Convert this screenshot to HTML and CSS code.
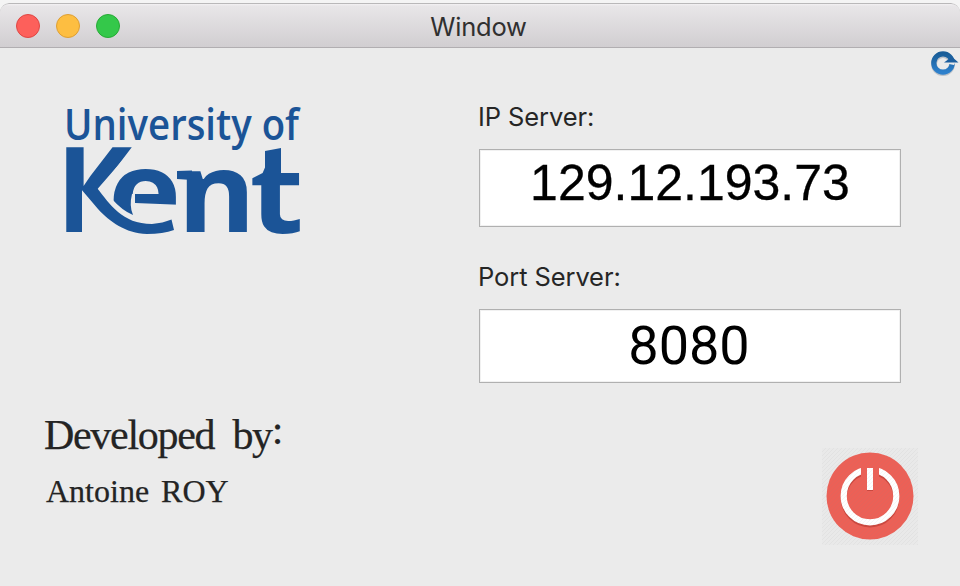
FILE: index.html
```html
<!DOCTYPE html>
<html lang="en">
<head>
<meta charset="utf-8">
<title>Window</title>
<link rel="stylesheet" href="styles.css">
</head>
<body>
<div class="window">
  <header class="titlebar">
    <div class="lights"><i class="light close"></i><i class="light minimise"></i><i class="light zoom"></i></div>
    <h1 class="title">Window</h1>
  </header>
  <main class="content">
    <section class="left">
      <svg class="logo" viewBox="60 100 250 140" role="img" aria-label="University of Kent">
        <defs>
          <clipPath id="k-top"><path d="M60 140H140L97.500 189H82V240H60Z"/></clipPath>
          <clipPath id="e-top"><path d="M100 150H185V205L135 203V194H132Q129 206 133 215Q122 210.500 112 199Z"/></clipPath>
        </defs>
        <g fill="#1b5497">
          <text class="logo-small" x="64" y="139.500" textLength="235" lengthAdjust="spacingAndGlyphs">University of</text>
          <g clip-path="url(#k-top)"><text class="logo-big" transform="translate(56 232) scale(.97 1)">K</text></g>
          <g clip-path="url(#e-top)"><text class="logo-big" transform="translate(108 232) scale(1.05 .95)">e</text></g>
          <text class="logo-big" transform="translate(177.500 232) scale(1.010 .95)">n</text>
          <text class="logo-big" transform="translate(249.500 232.500) scale(1.06 .93)">t</text>
          <path d="M177 171L192 170.500V180L177 179Z"/>
          <path d="M265 151L281 148V176H265Z"/>
          <path d="M81 187L97 188C110 204 122 224 152 224Q163 223 171.500 219.500L174 230Q163 234 147 234C125 233 110 222 98 209L81 189Z"/>
        </g>
      </svg>
      <div class="credits">
        <p class="credit-label">Developed by<span class="colon">:</span></p>
        <p class="credit-name">Antoine ROY</p>
      </div>
    </section>
    <section class="right">
      <label class="label" for="ip">IP Server:</label>
      <div class="field ip" id="ip">129.12.193.73</div>
      <label class="label port-label" for="port">Port Server:</label>
      <div class="field port" id="port">8080</div>
      <button class="power" aria-label="Power">
        <svg viewBox="0 0 96 97" width="96" height="97">
          <defs><pattern id="hatch" width="4" height="4" patternUnits="userSpaceOnUse"><path d="M-1 1L1-1M0 4L4 0M3 5L5 3" stroke="#888" stroke-opacity=".1" stroke-width=".8"/></pattern></defs>
          <rect width="96" height="97" fill="#e9e9e9"/>
          <circle cx="48" cy="48" r="43.500" fill="#ec6056"/>
          <circle cx="48" cy="50" r="26.300" fill="none" stroke="#cb473e" stroke-width="6.200"/>
          <circle cx="48" cy="48" r="26.300" fill="none" stroke="#fff" stroke-width="6.200"/>
          <path d="M39 17h18v13H39z" fill="#ec6056"/>
          <path d="M45 41.500h6v1.500h-6z" fill="#cb473e"/><path d="M45 20h6v22h-6z" fill="#fff"/>
          <rect width="96" height="97" fill="url(#hatch)"/>
        </svg>
      </button>
    </section>
    <svg class="refresh" viewBox="0 0 30 28" aria-label="Refresh">
      <defs><linearGradient id="blue" x2="0" y2="1"><stop stop-color="#195d98"/><stop offset="1" stop-color="#2d80cc"/></linearGradient></defs>
      <circle cx="13" cy="14" r="9" fill="none" stroke="#9aa4af" stroke-width="6" opacity=".6"/>
      <circle cx="13" cy="13" r="9.200" fill="none" stroke="url(#blue)" stroke-width="5.200"/>
      <path d="M17 13L22 9H27L24 15L19 14Z" fill="#ebebeb"/>
      <path d="M14 12.500L19.500 8.500L21 6L28.500 12.500Z" fill="#1c5e9e"/>
    </svg>
  </main>
</div>
</body>
</html>
```
FILE: styles.css
```css
* { box-sizing: border-box; }
body { margin: 0; padding-top: 3px; height: 586px; overflow: hidden; background: #f4f4f4; font-family: Inter, "Liberation Sans", sans-serif; }
h1, p { margin: 0; font-weight: 400; }
.window { height: 583px; background: #ebebeb; border-radius: 9px 9px 0 0; overflow: hidden; }
.titlebar { height: 45px; display: grid; grid-template-columns: 1fr auto 1fr; align-items: center; border-top: 1px solid #b9b8b9; border-bottom: 1px solid #b1aeb1; background: linear-gradient(#f3f1f3 0, #e8e6e8 2px, #d1ced1 100%); border-radius: 9px 9px 0 0; }
.lights { display: flex; gap: 16px; padding-left: 16px; }
.light { width: 24px; height: 24px; border-radius: 50%; border: 1px solid; }
.close { background: #fd605b; border-color: #df4744; }
.minimise { background: #fdbe41; border-color: #de9f34; }
.zoom { background: #34c84a; border-color: #27aa35; }
.title { padding: 2px 3px 0 0; font-size: 25.500px; line-height: 40px; letter-spacing: -.2px; color: #303030; }
.content { position: relative; height: 538px; display: grid; grid-template-columns: 479px 422px; }
.logo { display: block; width: 250px; height: 140px; margin: 52px 0 0 60px; }
.logo-small { font: 600 43px "Open Sans", sans-serif; }
.logo-big { font: 700 118px "Open Sans", sans-serif; }
.credits { padding: 169px 0 0 44px; font-family: "Liberation Serif", serif; color: #242424; -webkit-text-stroke: .25px #242424; }
.credit-label { font-size: 42px; line-height: 52px; letter-spacing: -1.300px; word-spacing: 9px; white-space: nowrap; }
.colon { position: relative; top: -5px; }
.credit-name { margin-top: 8px; padding-left: 2px; font-size: 32px; line-height: 44px; letter-spacing: 0; word-spacing: 4px; }
.right { display: flex; flex-direction: column; padding-top: 53px; }
.label { height: 32px; margin-left: -1px; line-height: 32px; font-size: 25.500px; letter-spacing: -.1px; color: #262626; }
.port-label { margin-top: 34px; }
.field { margin-top: 16px; background: #fff; border: 1px solid #b0b0b0; box-shadow: inset 0 0 0 1px #f1f1f1; text-align: center; color: #000; }
.ip { height: 78px; font: 50px/66px "Liberation Sans", sans-serif; -webkit-text-stroke: .3px #000; }
.port { height: 74px; padding-right: 2px; font: 54px/72px Roboto, sans-serif; }
.power { align-self: flex-end; width: 96px; height: 97px; margin: 65px -17px 0 0; padding: 0; border: 0; background: none; }
.power svg { display: block; }
.refresh { position: absolute; right: 0; top: 2px; width: 30px; height: 28px; }
```
